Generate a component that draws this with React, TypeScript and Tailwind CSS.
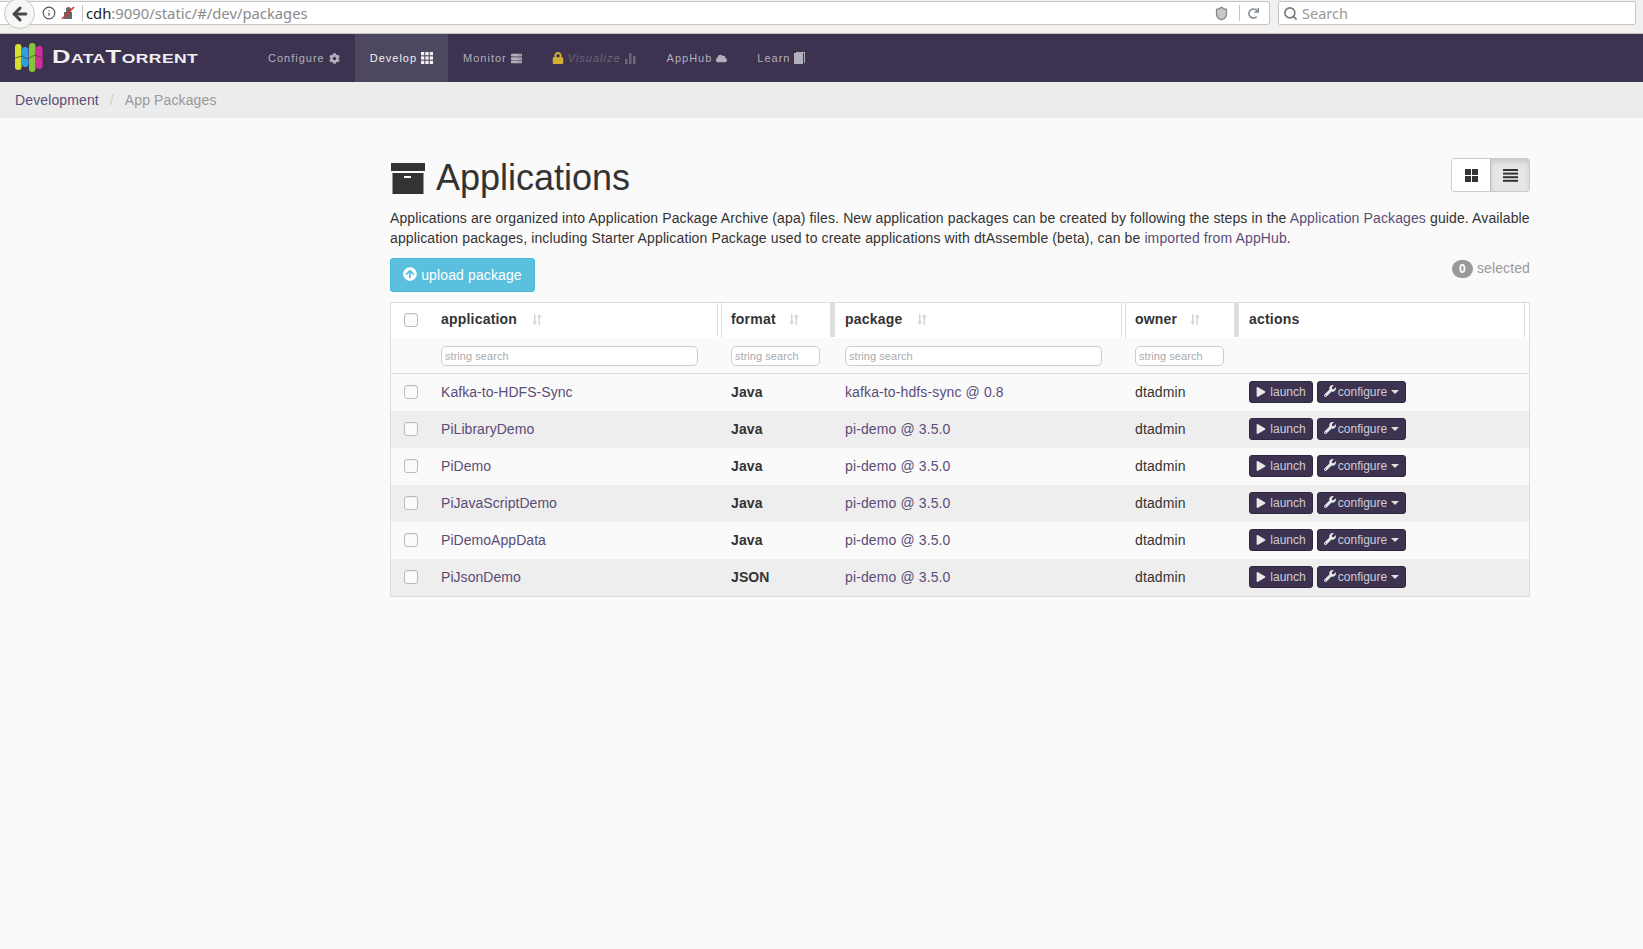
import React from 'react';
import {
  FaArrowCircleUp,
  FaCloud,
  FaCog,
  FaLock,
  FaPlay,
  FaRedo,
  FaServer,
  FaWrench,
} from 'react-icons/fa';
import { Info, Search, ArrowLeft, Shield } from 'lucide-react';

const rows = [
  { name: 'Kafka-to-HDFS-Sync', format: 'Java', pkg: 'kafka-to-hdfs-sync @ 0.8' },
  { name: 'PiLibraryDemo', format: 'Java', pkg: 'pi-demo @ 3.5.0' },
  { name: 'PiDemo', format: 'Java', pkg: 'pi-demo @ 3.5.0' },
  { name: 'PiJavaScriptDemo', format: 'Java', pkg: 'pi-demo @ 3.5.0' },
  { name: 'PiDemoAppData', format: 'Java', pkg: 'pi-demo @ 3.5.0' },
  { name: 'PiJsonDemo', format: 'JSON', pkg: 'pi-demo @ 3.5.0' },
];

const gridCols = 'grid grid-cols-[40px_290px_114px_290px_114px_1fr]';

const Logo = () => (
  <svg width="28" height="30" viewBox="0 0 28 30">
    <rect x="0" y="1" width="6.5" height="26" rx="3.2" fill="#d5e02e" />
    <rect x="7" y="4" width="6.5" height="20" rx="3.2" fill="#2f9fe0" />
    <rect x="14" y="0" width="6.5" height="29" rx="3.2" fill="#86c43c" />
    <rect x="21" y="3" width="6.5" height="23" rx="3.2" fill="#d42c9c" />
    <path d="M0 15 L7 13 L12 16 L20 12 L27 15" stroke="#4a4a2a" strokeWidth="0.8" fill="none" />
  </svg>
);

const ArchiveIcon = () => (
  <svg width="34" height="31" viewBox="0 0 34 31" className="mr-[11px] ml-px" fill="currentColor">
    <rect x="0" y="0" width="34" height="8" />
    <path d="M1.5 10 H32.5 V31 H1.5 Z M13 13 V15 H20 V13 Z" fillRule="evenodd" />
  </svg>
);

const ThIcon = () => (
  <svg width="12" height="12" viewBox="0 0 11 11" fill="currentColor">
    {[0, 4, 8].map((y) =>
      [0, 4, 8].map((x) => <rect key={`${x}-${y}`} x={x} y={y} width="3" height="3" />),
    )}
  </svg>
);

const ThLargeIcon = () => (
  <svg width="13" height="13" viewBox="0 0 13 13" fill="currentColor">
    <rect x="0" y="0" width="6" height="6" />
    <rect x="7" y="0" width="6" height="6" />
    <rect x="0" y="7" width="6" height="6" />
    <rect x="7" y="7" width="6" height="6" />
  </svg>
);

const StatsIcon = () => (
  <svg width="12" height="11" viewBox="0 0 12 11" fill="currentColor">
    <rect x="0" y="6" width="2.5" height="5" />
    <rect x="4" y="0" width="2.5" height="11" />
    <rect x="8" y="3" width="2.5" height="8" />
  </svg>
);

const BookIcon = () => (
  <svg width="11" height="12" viewBox="0 0 11 12" fill="currentColor">
    <rect x="0" y="1" width="9" height="11" />
    <path d="M2 0 H11 V11 H10 V1 H2 Z" />
  </svg>
);

const ListIcon = () => (
  <svg width="15" height="13" viewBox="0 0 15 13" fill="currentColor">
    <rect y="0" width="15" height="2" />
    <rect y="3.6" width="15" height="2" />
    <rect y="7.2" width="15" height="2" />
    <rect y="10.8" width="15" height="2" />
  </svg>
);

const SortIcon: React.FC<{ tight?: boolean }> = ({ tight }) => (
  <svg
    width="10"
    height="11"
    viewBox="0 0 10 11"
    className={(tight ? 'ml-[13px]' : 'ml-[15px]') + ' text-[#d5d5d5]'}
    fill="currentColor"
  >
    <path d="M2 0 H3.5 V7.5 H5.2 L2.75 11 L0.3 7.5 H2 Z" />
    <path d="M6.5 11 H8 V3.5 H9.7 L7.25 0 L4.8 3.5 H6.5 Z" />
  </svg>
);

const Checkbox = () => (
  <span className="-mt-[2px] block h-[14px] w-[14px] rounded-[3px] border border-[#bbbbbb] bg-[#fbfbfb] shadow-[inset_0_1px_1px_rgba(0,0,0,0.05)]" />
);

const NavItem: React.FC<{ label: string; active?: boolean; children: React.ReactNode }> = ({
  label,
  active,
  children,
}) => (
  <a
    className={
      'flex h-full items-center gap-[4px] px-[15px] text-[11px] tracking-[1px] ' +
      (active ? 'bg-[#4e4760] text-[#f2f2f2]' : 'text-[#b3b0bd]')
    }
  >
    <span>{label}</span>
    {children}
  </a>
);

const HeaderCell: React.FC<{ label?: string; sort?: boolean; left?: boolean; right?: string }> = ({
  label,
  sort = true,
  left,
  right,
}) => (
  <div className={'flex h-[35px] bg-white pb-px ' + (left ? 'border-l border-[#dddddd]' : '')}>
    <div
      className={
        'flex flex-1 items-center pb-[2px] text-[14px] font-bold tracking-[0.2px] text-[#333333] ' +
        (left ? 'pl-[9px]' : 'pl-[10px]')
      }
    >
      {label}
      {sort && <SortIcon tight={left} />}
    </div>
    <div className={right} />
  </div>
);

const SearchInput: React.FC<{ width: string }> = ({ width }) => (
  <div
    className={
      'mt-px ml-[10px] flex h-[20px] items-center rounded-[5px] border border-[#cccccc] bg-white pl-[3px] text-[11px] tracking-[0.05px] text-[#aaaaaa] ' +
      width
    }
  >
    <span className="mt-px">string search</span>
  </div>
);

const ActionButtons = () => (
  <div className="-mt-px ml-[10px] flex gap-[4px] text-[12px] tracking-normal text-[#cfcdd6]">
    <button className="flex h-[22px] w-[64px] items-center justify-center gap-[4px] rounded-[3px] border border-[#2f2740] bg-[#3d3350]">
      <FaPlay className="text-[10px] text-[#e8e8e8]" /> launch
    </button>
    <button className="flex h-[22px] w-[89px] items-center justify-center gap-[2px] rounded-[3px] border border-[#2f2740] bg-[#3d3350]">
      <FaWrench className="-mt-[2px] text-[12px] text-[#e8e8e8]" /> configure
      <span className="ml-[2px] border-x-[4px] border-t-[4px] border-x-transparent border-t-[#e0e0e0]" />
    </button>
  </div>
);

export default function App() {
  return (
    <div className="min-h-screen bg-[#fafafa] font-['Liberation_Sans',Arial,sans-serif] text-[14px] tracking-[0.12px] text-[#333333]">
      {/* Browser toolbar */}
      <div className="flex h-[34px] items-start gap-[8px] border-b border-[#c4c2bf] bg-[#f2f1ef] pt-px font-['Noto_Sans',sans-serif] tracking-normal">
        <div className="relative flex h-[24px] flex-1 items-center rounded-r-[3px] border border-l-0 border-[#c8c5c1] bg-white">
          <div className="absolute -top-[4px] left-[4px] flex h-[31px] w-[31px] items-center justify-center rounded-full border border-[#c8c5c1] bg-[#f7f6f5] text-[#4a4a4a]">
            <ArrowLeft size={20} strokeWidth={3.6} />
          </div>
          <Info size={14} className="ml-[42px] text-[#555555]" />
          <svg width="15" height="14" viewBox="0 0 15 14" className="ml-[5px]">
            <path d="M3 6 H11 V13 H3 Z M5 6 V3.5 a2.5 2.5 0 0 1 5 0 V6" fill="#666666" />
            <path d="M1 13 L13 1" stroke="#e0322a" strokeWidth="1.6" />
          </svg>
          <div className="ml-[6px] h-[16px] w-px bg-[#c8c5c1]" />
          <div className="ml-[3px] text-[14.8px] text-[#8a8a8a]">
            <span className="text-[#222222]">cdh</span>:9090/static/#/dev/packages
          </div>
          <div className="flex-1" />
          <Shield size={15} className="mr-[2px] fill-[#c8c8c8] text-[#888888]" />
          <div className="mx-[8px] h-[16px] w-px bg-[#c8c5c1]" />
          <FaRedo className="mr-[10px] text-[11px] text-[#7e8a94]" />
        </div>
        <div className="mr-[7px] flex h-[24px] w-[358px] items-center rounded-[2px] border border-[#c8c5c1] bg-white pl-[4px] text-[14.5px] text-[#999999]">
          <Search size={15} strokeWidth={2.6} className="text-[#777777]" />
          <span className="mt-px ml-[4px]">Search</span>
        </div>
      </div>

      {/* App navbar */}
      <nav className="flex h-[48px] items-center bg-[#3d3350]">
        <div className="flex w-[253px] items-center pl-[15px]">
          <Logo />
          <span className="ml-[9px] origin-left scale-x-[1.46] text-[17.5px] leading-none font-bold tracking-[0.3px] text-[#f0eff2] [font-variant:small-caps]">
            DataTorrent
          </span>
        </div>
        <NavItem label="Configure">
          <FaCog className="text-[11px]" />
        </NavItem>
        <NavItem label="Develop" active>
          <ThIcon />
        </NavItem>
        <NavItem label="Monitor">
          <FaServer className="text-[11px]" />
        </NavItem>
        <a className="flex h-full items-center gap-[4px] px-[15px] text-[11px] tracking-[1px] text-[#6c667a]">
          <FaLock className="text-[12px] text-[#d4af37]" />
          <span className="italic">Visualize</span>
          <StatsIcon />
        </a>
        <NavItem label="AppHub">
          <FaCloud className="text-[11px]" />
        </NavItem>
        <NavItem label="Learn">
          <BookIcon />
        </NavItem>
      </nav>

      {/* Breadcrumb */}
      <div className="flex h-[36px] items-center bg-[#ececec] pl-[15px]">
        <a className="text-[#5a4d78]">Development</a>
        <span className="mx-[11px] text-[#cccccc]">/</span>
        <span className="text-[#999999]">App Packages</span>
      </div>

      <main className="ml-[390px] w-[1140px]">
        <div className="box-content flex h-[50px] items-start justify-between pt-[40px]">
          <h1 className="flex items-center text-[36px] leading-[40px] tracking-normal text-[#333333]">
            <ArchiveIcon />
            Applications
          </h1>
          <div className="flex h-[34px] overflow-hidden rounded-[3px] border border-[#cccccc]">
            <div className="flex w-[38px] items-center justify-center bg-white">
              <ThLargeIcon />
            </div>
            <div className="flex w-[39px] items-center justify-center border-l border-[#bbbbbb] bg-[#e6e6e6] shadow-[inset_0_3px_5px_rgba(0,0,0,0.125)]">
              <ListIcon />
            </div>
          </div>
        </div>

        <p className="leading-[20px]">
          Applications are organized into Application Package Archive (apa) files. New application packages can be
          created by following the steps in the <a className="text-[#5a4d78]">Application Packages</a> guide. Available
          application packages, including Starter Application Package used to create applications with dtAssemble
          (beta), can be <a className="text-[#5a4d78]">imported from AppHub</a>.
        </p>

        <div className="mt-[10px] flex items-start justify-between">
          <button className="flex h-[34px] w-[145px] items-center justify-center gap-[4px] rounded-[3px] border border-[#46b8da] bg-[#5bc0de] text-white">
            <FaArrowCircleUp className="-mt-[2px] text-[14px]" /> upload package
          </button>
          <div className="flex items-center gap-[4px] text-[#999999]">
            <span className="flex h-[18px] w-[21px] items-center justify-center rounded-full bg-[#999999] text-[12px] font-bold text-white">
              0
            </span>
            selected
          </div>
        </div>

        <div className="mt-[10px] border border-[#dddddd]">
          <div className={gridCols}>
            <div className="flex h-[35px] items-center justify-center bg-white">
              <Checkbox />
            </div>
            <HeaderCell label="application" right="mr-[3px] w-px bg-[#dddddd]" />
            <HeaderCell label="format" left right="w-[5px] bg-[#dddddd]" />
            <HeaderCell label="package" right="mr-[3px] w-px bg-[#dddddd]" />
            <HeaderCell label="owner" left right="w-[5px] bg-[#dddddd]" />
            <HeaderCell label="actions" sort={false} right="mr-[4px] w-px bg-[#dddddd]" />
          </div>
          <div className={gridCols + ' h-[36px] items-center border-b border-[#dddddd]'}>
            <div />
            <SearchInput width="w-[257px]" />
            <SearchInput width="w-[89px]" />
            <SearchInput width="w-[257px]" />
            <SearchInput width="w-[89px]" />
            <div />
          </div>
          {rows.map((row, i) => (
            <div
              key={row.name}
              className={gridCols + ' h-[37px] items-center ' + (i % 2 === 0 ? 'bg-[#fafafa]' : 'bg-[#eeeeee]')}
            >
              <div className="flex justify-center">
                <Checkbox />
              </div>
              <a className="pl-[10px] tracking-[0.05px] text-[#5a4d78]">{row.name}</a>
              <div className="pl-[10px] font-bold">{row.format}</div>
              <a className="pl-[10px] text-[#5a4d78]">{row.pkg}</a>
              <div className="pl-[10px]">dtadmin</div>
              <ActionButtons />
            </div>
          ))}
        </div>
      </main>
    </div>
  );
}
